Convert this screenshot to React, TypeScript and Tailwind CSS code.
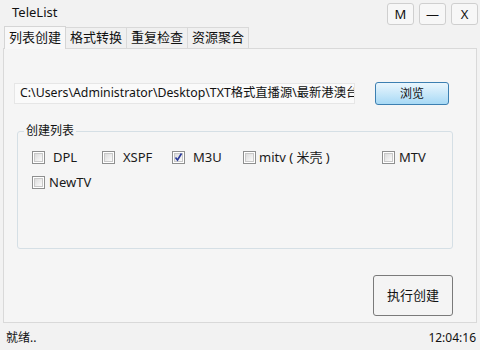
import React from 'react';

const cjk = { fontFamily: '"Noto Sans", "Noto Sans CJK SC", sans-serif' };

function Check({ checked }: { checked?: boolean }) {
    return (
        <span className="w-[13px] h-[13px] border border-[#8e8f8f] bg-white flex items-center justify-center shrink-0">
            <span className="w-[9px] h-[9px] bg-gradient-to-br from-[#dcdcdc] to-[#fbfbfb] border border-[#c8c8c8] flex items-center justify-center">
                {checked && (
                    <svg width="9" height="9" viewBox="0 0 9 9" className="overflow-visible">
                        <path d="M1.5 4.5 L3.5 7 L7.5 0.5" stroke="#2a3a9a" strokeWidth="1.6" fill="none" />
                    </svg>
                )}
            </span>
        </span>
    );
}

function Item({ label, checked, w, gap }: { label: string; checked?: boolean; w: string; gap: string }) {
    return (
        <div className={`flex items-center ${w} ${gap}`}>
            <Check checked={checked} />
            <span className="text-[13px] text-[#1a1a1a] leading-none">{label}</span>
        </div>
    );
}

export default function App() {
    return (
        <div className="w-[480px] h-[350px] bg-[#f2f2f2] flex flex-col overflow-hidden text-[#111]" style={cjk}>
            {/* title bar */}
            <div className="h-[26px] flex items-start justify-between pl-[12px] pr-[2px]">
                <span className="text-[13px] mt-[6px] leading-none">TeleList</span>
                <div className="flex gap-[5px] mt-[3px]">
                    {['M', '—', 'X'].map((t) => (
                        <div key={t} className="w-[27px] h-[22px] border border-[#cfcfcf] rounded-[3px] bg-[#f7f7f7] flex items-center justify-center text-[13px] leading-none">
                            {t}
                        </div>
                    ))}
                </div>
            </div>

            {/* tabs */}
            <div className="flex items-end pl-[4px] h-[22px]">
                <div className="h-[23px] px-[4px] border border-b-0 border-[#d5d5d5] bg-[#f8f8f8] text-[13px] flex items-center relative z-10 -mb-px">列表创建</div>
                <div className="h-[21px] px-[4px] border border-l-0 border-b-0 border-[#d9d9d9] bg-[#f0f0f0] text-[13px] flex items-center">格式转换</div>
                <div className="h-[21px] px-[4px] border border-l-0 border-b-0 border-[#d9d9d9] bg-[#f0f0f0] text-[13px] flex items-center">重复检查</div>
                <div className="h-[21px] px-[4px] border border-l-0 border-b-0 border-[#d9d9d9] bg-[#f0f0f0] text-[13px] flex items-center">资源聚合</div>
            </div>

            {/* tab panel */}
            <div className="flex-1 mx-[3px] mb-[3px] border border-[#d9d9d9] bg-[#f5f5f5] flex flex-col pl-[10px] pt-[33px]">
                <div className="flex items-center">
                    <div className="w-[341px] h-[21px] border border-[#e6e6e6] bg-[#fafafa] text-[12.3px] pl-[5px] flex items-center overflow-hidden whitespace-nowrap">
                        C:\Users\Administrator\Desktop\TXT格式直播源\最新港澳台
                    </div>
                    <div className="ml-[20px] w-[74px] h-[23px] rounded-[3px] border border-[#3c7fb1] bg-gradient-to-b from-[#eaf6fd] to-[#a7d9f5] flex items-center justify-center text-[12px]">
                        浏览
                    </div>
                </div>

                {/* group box */}
                <div className="relative mt-[26px] ml-[3px] w-[436px] h-[118px] border border-[#d5dfe5] rounded-[3px] pt-[19px] pl-[14px]">
                    <span className="absolute -top-[9px] left-[6px] px-[2px] bg-[#f5f5f5] text-[12px] leading-[16px]">创建列表</span>
                    <div className="flex">
                        <Item label=" DPL" w="w-[70px]" gap="gap-[8px]" />
                        <Item label="XSPF" w="w-[70px]" gap="gap-[8px]" />
                        <Item label="M3U" checked w="w-[71px]" gap="gap-[8px]" />
                        <Item label="mitv ( 米壳 )" w="w-[139px]" gap="gap-[3px]" />
                        <Item label="MTV" w="w-[60px]" gap="gap-[4px]" />
                    </div>
                    <div className="flex mt-[12px]">
                        <Item label="NewTV" w="w-[80px]" gap="gap-[4px]" />
                    </div>
                </div>

                <div className="flex justify-end pr-[23px] mt-[26px]">
                    <div className="w-[80px] h-[41px] rounded-[3px] border border-[#7a7a7a] bg-[#f4f4f4] flex items-center justify-center text-[13px]">
                        执行创建
                    </div>
                </div>
            </div>

            {/* status bar */}
            <div className="h-[24px] flex items-center justify-between pl-[6px] pr-[4px] text-[12px] bg-[#f2f2f2]">
                <span>就绪..</span>
                <span>12:04:16</span>
            </div>
        </div>
    );
}
